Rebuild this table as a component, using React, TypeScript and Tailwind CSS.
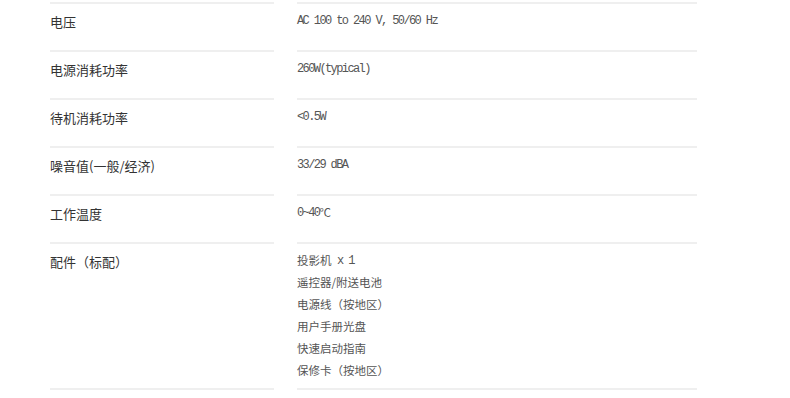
import React from "react";

const mono = "font-['Liberation_Mono',monospace] text-[12px] tracking-[-1.6px]";
const cjk = "font-['Noto_Sans_CJK_SC',sans-serif] text-[11.5px]";

type Spec = { label: string; value: React.ReactNode[] };

const Line = ({ children }: { children: React.ReactNode }) => (
  <div className="h-[22px] flex items-center whitespace-pre">{children}</div>
);

const specs: Spec[] = [
  { label: "电压", value: [<span className={mono}>AC 100 to 240 V, 50/60 Hz</span>] },
  { label: "电源消耗功率", value: [<span className={mono}>260W(typical)</span>] },
  { label: "待机消耗功率", value: [<span className={mono}>&lt;0.5W</span>] },
  { label: "噪音值(一般/经济)", value: [<span className={mono}>33/29 dBA</span>] },
  {
    label: "工作温度",
    value: [
      <>
        <span className={mono}>0~40</span>
        <span className={cjk}>℃</span>
      </>,
    ],
  },
  {
    label: "配件（标配）",
    value: [
      <>
        <span className={cjk}>投影机</span>
        <span className={mono}> x 1</span>
      </>,
      <span className={cjk}>遥控器/附送电池</span>,
      <span className={cjk}>电源线（按地区）</span>,
      <span className={cjk}>用户手册光盘</span>,
      <span className={cjk}>快速启动指南</span>,
      <span className={cjk}>保修卡（按地区）</span>,
    ],
  },
];

const SpecRow = ({ label, value }: Spec) => {
  return (
    <div className="flex gap-[23px]">
      <div className="w-[224px] min-h-[48px] border-t-2 border-[#efefef] pt-[7px] pb-[5px] text-[13px] leading-[22px] text-[#333] font-['Noto_Sans_CJK_SC',sans-serif]">
        {label}
      </div>
      <div className="w-[400px] min-h-[48px] border-t-2 border-[#efefef] pt-[6px] pb-[6px] text-[#555]">
        {value.map((v, i) => (
          <Line key={i}>{v}</Line>
        ))}
      </div>
    </div>
  );
};

export default function App() {
  return (
    <div className="w-[790px] h-[398px] bg-white overflow-hidden">
      <div className="ml-[50px] mt-[2px]">
        {specs.map((s) => (
          <SpecRow key={s.label} {...s} />
        ))}
        {/* closing rule */}
        <div className="flex gap-[23px]">
          <div className="w-[224px] border-t-2 border-[#efefef]" />
          <div className="w-[400px] border-t-2 border-[#efefef]" />
        </div>
      </div>
    </div>
  );
}
